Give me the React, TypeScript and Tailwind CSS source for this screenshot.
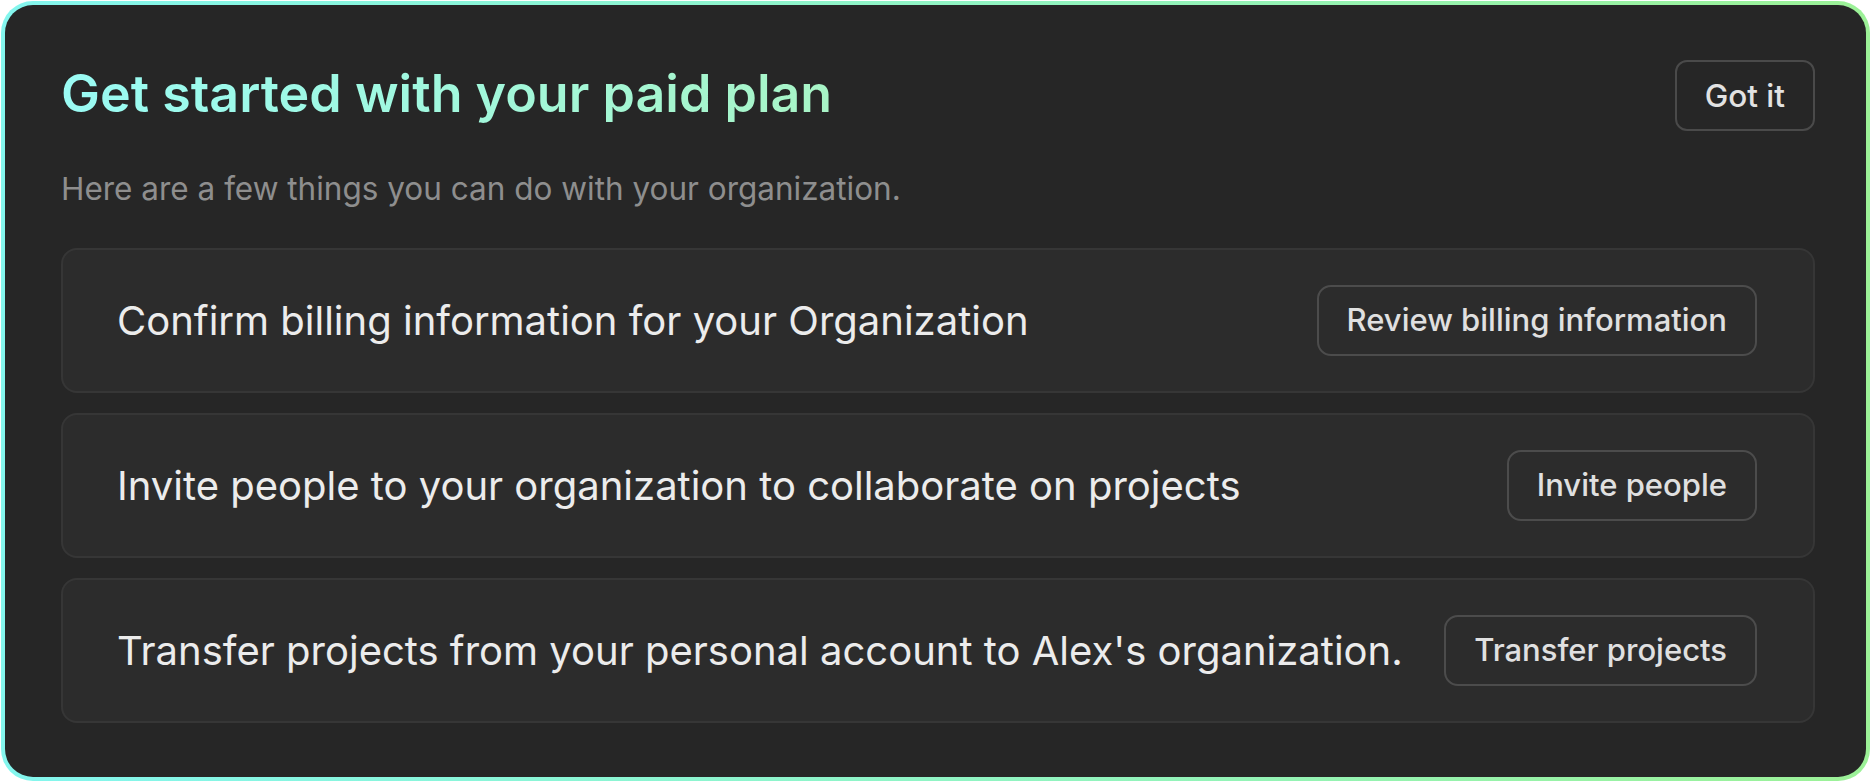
const tasks = [
  {
    label: "Confirm billing information for your Organization",
    action: "Review billing information",
  },
  {
    label: "Invite people to your organization to collaborate on projects",
    action: "Invite people",
  },
  {
    label: "Transfer projects from your personal account to Alex's organization.",
    action: "Transfer projects",
  },
];

export default function App() {
  return (
    <div
      className="w-[1872px] h-[784px] bg-white pt-px pl-px overflow-hidden"
      style={{ fontFamily: "Inter, 'Noto Sans', sans-serif" }}
    >
      <div className="w-[1869px] h-[780px] rounded-[32px] p-[4px] bg-gradient-to-r from-[#84f6ee] to-[#9cf197]">
        <div className="h-full rounded-[28px] bg-[#262626] pt-[55px] pb-14 pl-14 pr-[51px]">
          <div className="flex items-center justify-between">
            <h1 className="text-[52px] leading-none font-semibold bg-gradient-to-r from-[#9afbf4] to-[#a8f4c6] bg-clip-text text-transparent pb-1">
              Get started with your paid plan
            </h1>
            <button className="h-[71px] px-7 rounded-xl border-2 border-[#4a4a4a] text-[31.5px] font-medium text-[#e2e2e2]">
              Got it
            </button>
          </div>

          <p className="mt-10 text-[31.5px] leading-9 text-[#8e8e8e]">
            Here are a few things you can do with your organization.
          </p>

          <div className="mt-[41px] flex flex-col gap-5">
            {tasks.map((t) => (
              <div
                key={t.action}
                className="h-[145px] pl-[54px] pr-14 flex items-center justify-between rounded-2xl border-2 border-[#363636] bg-[#2c2c2c]"
              >
                <span className="text-[40px] text-[#ececec]">{t.label}</span>
                <button className="h-[71px] px-7 rounded-[14px] border-2 border-[#4c4c4c] text-[31px] font-medium text-[#e0e0e0]">
                  {t.action}
                </button>
              </div>
            ))}
          </div>
        </div>
      </div>
    </div>
  );
}
